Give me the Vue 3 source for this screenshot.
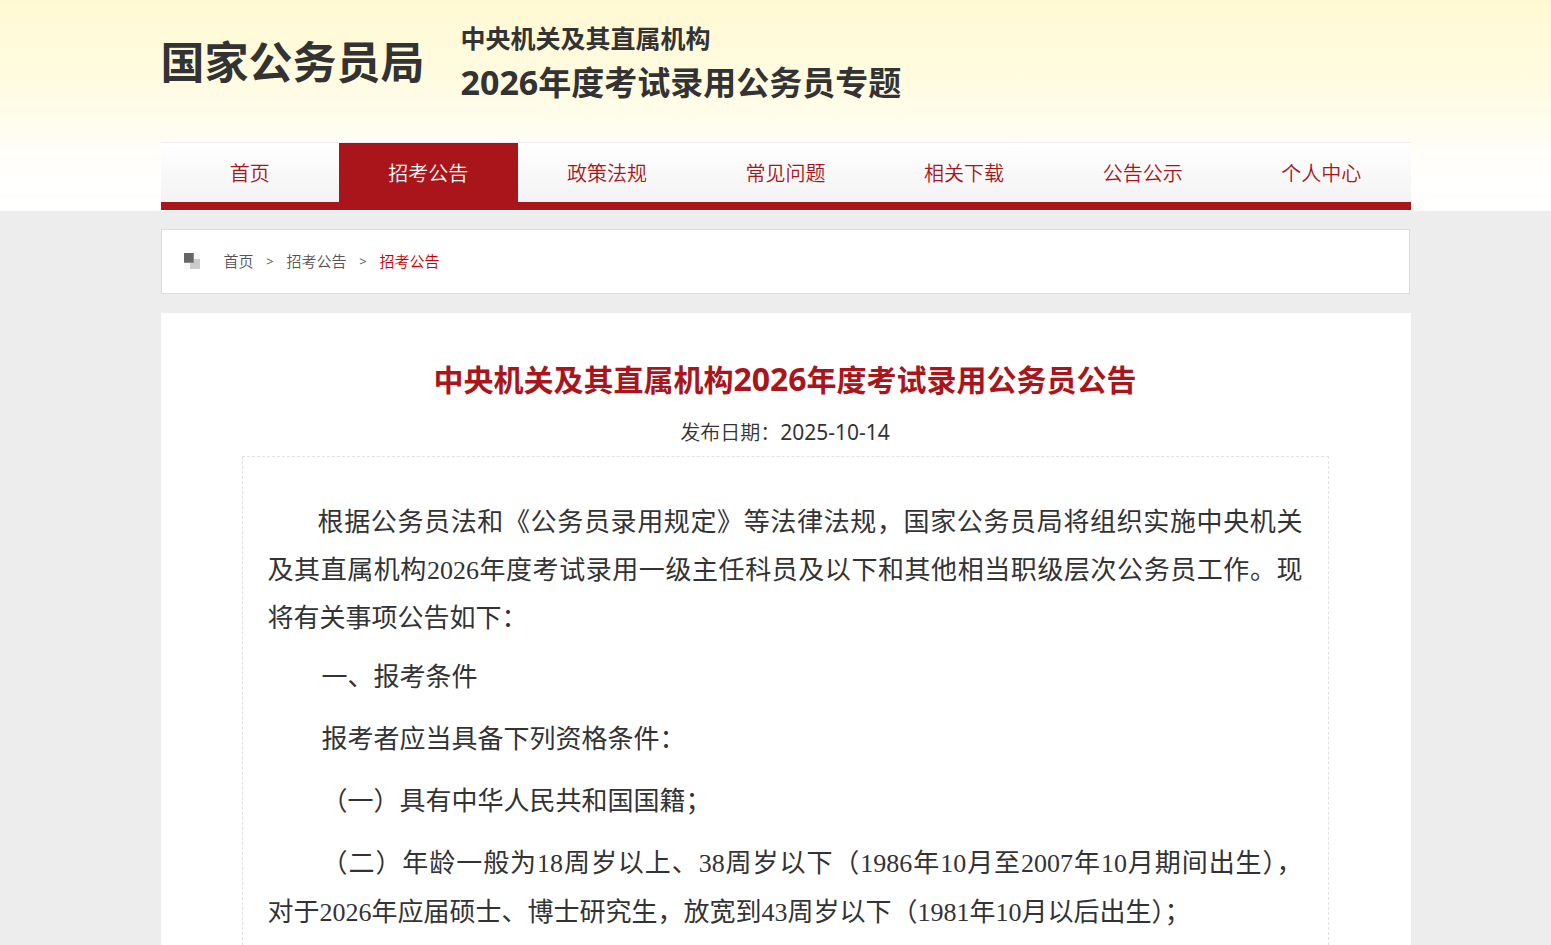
<script setup>
const navItems = ['首页', '招考公告', '政策法规', '常见问题', '相关下载', '公告公示', '个人中心']
const activeItem = '招考公告'

const paragraphs = [
  '一、报考条件',
  '报考者应当具备下列资格条件：',
  '（一）具有中华人民共和国国籍；'
]
</script>

<template>
  <div class="page">
    <header class="header">
      <div class="wrap">
        <div class="brand">
          <div class="logo">国家公务员局</div>
          <div class="topic">
            <div class="topic-small">中央机关及其直属机构</div>
            <div class="topic-large"><span class="topic-year">2026</span>年度考试录用公务员专题</div>
          </div>
        </div>
        <nav class="nav">
          <a
            v-for="item in navItems"
            :key="item"
            href="#"
            class="nav-item"
            :class="{ active: item === activeItem }"
          >{{ item }}</a>
        </nav>
      </div>
    </header>

    <main class="main">
      <div class="wrap column">
        <nav class="crumbs" aria-label="当前位置">
          <svg class="crumb-icon" width="16" height="16" viewBox="0 0 16 16" aria-hidden="true">
            <rect width="16" height="16" fill="#f6f6f6" />
            <rect x="6" y="6" width="10" height="10" fill="#cbcbcb" />
            <rect width="10" height="10" fill="#8b8b8b" />
            <rect width="9" height="9" fill="#666" />
          </svg>
          <a href="#">首页</a>
          <span class="sep">&gt;</span>
          <a href="#">招考公告</a>
          <span class="sep">&gt;</span>
          <a href="#" class="current">招考公告</a>
        </nav>

        <article class="article">
          <h1 class="title">中央机关及其直属机构<span class="title-year">2026</span>年度考试录用公务员公告</h1>
          <div class="date">发布日期：<time class="date-value" datetime="2025-10-14">2025-10-14</time></div>
          <div class="content">
            <p class="intro">根据公务员法和《公务员录用规定》等法律法规，国家公务员局将组织实施中央机关及其直属机构2026年度考试录用一级主任科员及以下和其他相当职级层次公务员工作。现将有关事项公告如下：</p>
            <p v-for="text in paragraphs" :key="text">{{ text }}</p>
            <p>（二）年龄一般为18周岁以上、38周岁以下（1986年10月至2007年10月期间出生），<span class="keep">对于</span>2026年应届硕士、博士研究生，放宽到43周岁以下（1981年10月以后出生）；</p>
          </div>
        </article>
      </div>
    </main>
  </div>
</template>

<style>
body {
  margin: 0;
  background: #ededed;
}
</style>

<style scoped>
.page {
  display: flex;
  flex-direction: column;
  min-height: 100vh;
  color: #333;
  font-family: "Noto Sans", "Noto Sans CJK SC", sans-serif;
}

a {
  color: inherit;
  text-decoration: none;
}

.header,
.main {
  padding-left: 20px;
}

.header {
  padding-bottom: 1px;
  background: linear-gradient(#fff9d3, #fffbdf 35%, #fffdf0 62%, #fffefa 75%, #fff);
}

.wrap {
  width: 100%;
  max-width: 1250px;
  margin: 0 auto;
}

.brand {
  display: flex;
  align-items: flex-start;
  gap: 36px;
  height: 142px;
  font-weight: 700;
  white-space: nowrap;
}

.logo {
  margin-top: 30px;
  font-size: 44px;
  line-height: 64px;
}

.topic {
  margin-top: 19px;
}

.topic-small {
  font-size: 25px;
  line-height: 38px;
}

.topic-large {
  font-size: 33px;
  line-height: 50px;
}

.topic-year {
  font-size: 34px;
}

.nav {
  display: flex;
  border-bottom: 8px solid #a9151a;
  background: linear-gradient(#fff, #f3f3f3);
}

.nav-item {
  flex: 1;
  height: 59px;
  border-top: 1px solid #eee;
  color: #a9151a;
  font-size: 20px;
  font-weight: 350;
  line-height: 61px;
  text-align: center;
}

.nav-item.active {
  background: #a9151a;
  background-clip: padding-box;
  color: #fff;
}

.main,
.column {
  display: flex;
  flex: 1;
  flex-direction: column;
}

.crumbs {
  display: flex;
  align-items: center;
  height: 61px;
  margin: 18px 1px 19px 0;
  padding: 0 0 2px 22px;
  border: 1px solid #dcdcdc;
  background: #fff;
  color: #555;
  font-size: 15px;
  font-weight: 350;
}

.crumb-icon {
  margin-right: 24px;
}

.sep {
  width: 33px;
  font-size: 13px;
  font-weight: 400;
  text-align: center;
}

.current {
  color: #d00000;
}

.article {
  display: flex;
  flex: 1;
  flex-direction: column;
  padding: 41px 82px 0 81px;
  background: #fff;
}

.title {
  margin: 0;
  color: #a9151a;
  font-size: 30px;
  font-weight: 700;
  line-height: 50px;
  text-align: center;
}

.title-year {
  font-size: 32px;
}

.date {
  padding: 12px 0 8px;
  font-size: 20px;
  font-weight: 350;
  line-height: 30px;
  text-align: center;
}

.date-value {
  font-size: 21px;
  font-weight: 400;
}

.content {
  flex: 1;
  padding: 42px 25px 0;
  border: 1px dashed #e2e2e2;
  border-bottom: 0;
  font-family: "Liberation Serif", "Noto Sans CJK SC", serif;
  font-size: 26px;
}

.content p {
  margin: 0 0 13px;
  line-height: 49px;
  text-align: justify;
  text-indent: 54px;
}

.content p:last-child {
  margin-bottom: 0;
}

.content .intro {
  margin-bottom: 10px;
  line-height: 48px;
  text-indent: 50px;
}

.keep {
  white-space: nowrap;
}
</style>
